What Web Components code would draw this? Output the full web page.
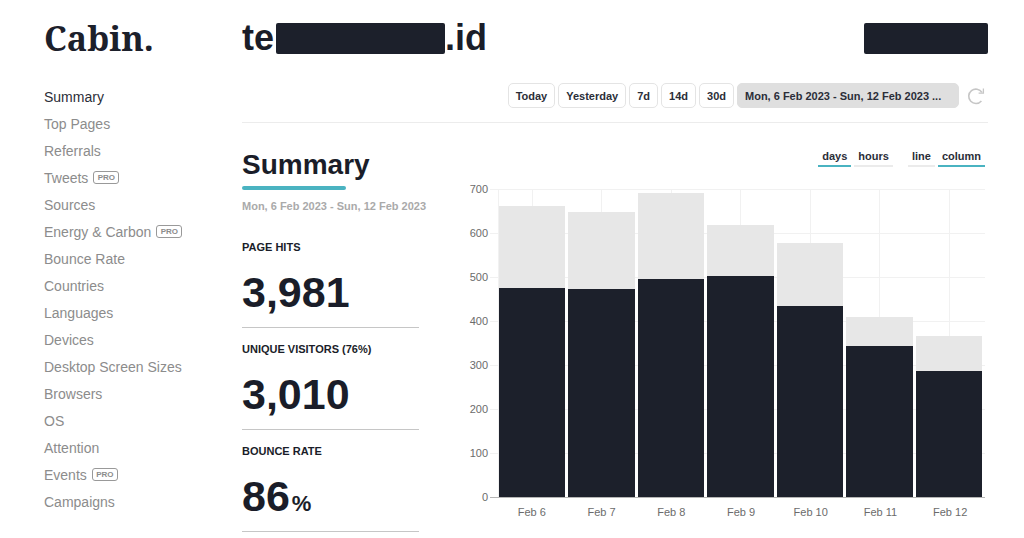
<!DOCTYPE html>
<html lang="en">
<head>
<meta charset="utf-8">
<meta name="viewport" content="width=device-width, initial-scale=1">
<title>Cabin</title>
<style>
  body {
    margin: 0;
    background: #fff;
    color: #1a1d29;
    font-family: "Liberation Sans", Arial, sans-serif;
    --ink: #1c202b;
    --teal: #4ab3c1;
  }
</style>
</head>
<body>
<cabin-app></cabin-app>

<template id="t-app">
  <style>
    :host { display: grid; grid-template-columns: 198px minmax(0, 1fr); padding: 0 36px 0 44px; }
    header, .title { height: 76px; display: flex; align-items: center; box-sizing: border-box; }
    .logo { font: bold 34px/40px "Noto Serif", "DejaVu Serif Condensed", "DejaVu Serif", serif; color: var(--ink); text-decoration: none; }
    .title { justify-content: space-between; }
    h1 { margin: 0; font-size: 36px; line-height: 40px; display: flex; align-items: center; }
    .range { display: flex; justify-content: flex-end; height: 47px; padding-top: 7px; border-bottom: 1px solid #ececec; box-sizing: border-box; }
    .report { display: grid; grid-template-columns: 177px minmax(0, 1fr); column-gap: 48px; padding: 24px 3px 0 0; }
    h2 { margin: 0; font-size: 28px; line-height: 36px; }
    .bar { width: 104px; height: 4px; border-radius: 2px; background: var(--teal); margin-top: 3px; }
    .period { margin: 9px 0 0; font-size: 11px; line-height: 14px; font-weight: bold; color: #aaa; white-space: nowrap; }
    .metrics { padding-top: 13px; }
    .toggles { display: flex; justify-content: flex-end; gap: 15px; height: 42px; }
  </style>
  <header><a class="logo" href="#">Cabin.</a></header>
  <div class="title">
    <h1>te<redacted-box style="--w:169px"></redacted-box>.id</h1>
    <redacted-box style="--w:124px"></redacted-box>
  </div>
  <cabin-nav></cabin-nav>
  <main>
    <div class="range"><range-picker></range-picker></div>
    <div class="report">
      <section>
        <h2>Summary</h2>
        <div class="bar"></div>
        <p class="period">Mon, 6 Feb 2023 - Sun, 12 Feb 2023</p>
        <div class="metrics">
          <metric-card label="PAGE HITS">3,981</metric-card>
          <metric-card label="UNIQUE VISITORS (76%)">3,010</metric-card>
          <metric-card label="BOUNCE RATE" unit="%">86</metric-card>
        </div>
      </section>
      <section>
        <div class="toggles">
          <toggle-group options="days,hours" selected="days" label="Interval"></toggle-group>
          <toggle-group options="line,column" selected="column" label="Chart type"></toggle-group>
        </div>
        <bar-chart max="700" step="100"></bar-chart>
      </section>
    </div>
  </main>
</template>

<template id="t-redacted">
  <style>:host { display: block; flex: none; width: var(--w); height: 31px; border-radius: 2px; background: var(--ink); margin-left: 2px; }</style>
</template>

<template id="t-nav">
  <style>
    :host { display: block; padding-top: 7px; }
    nav { display: flex; flex-direction: column; }
  </style>
  <nav aria-label="Reports">
    <nav-item current>Summary</nav-item>
    <nav-item>Top Pages</nav-item>
    <nav-item>Referrals</nav-item>
    <nav-item pro>Tweets</nav-item>
    <nav-item>Sources</nav-item>
    <nav-item pro>Energy &amp; Carbon</nav-item>
    <nav-item>Bounce Rate</nav-item>
    <nav-item>Countries</nav-item>
    <nav-item>Languages</nav-item>
    <nav-item>Devices</nav-item>
    <nav-item>Desktop Screen Sizes</nav-item>
    <nav-item>Browsers</nav-item>
    <nav-item>OS</nav-item>
    <nav-item>Attention</nav-item>
    <nav-item pro>Events</nav-item>
    <nav-item>Campaigns</nav-item>
  </nav>
</template>

<template id="t-item">
  <style>
    :host { display: flex; align-items: center; gap: 5px; height: 27px; color: #8c8c8c; font-size: 14px; }
    :host([current]) { color: #2b2e38; }
    a { color: inherit; text-decoration: none; line-height: 18px; white-space: nowrap; }
    .pro { display: none; box-sizing: border-box; width: 26px; height: 13px; border: 1px solid #999; border-radius: 3px; font-size: 8px; line-height: 11px; font-weight: bold; text-align: center; }
    :host([pro]) .pro { display: block; }
  </style>
  <a href="#"><slot></slot></a>
</template>

<template id="t-range">
  <style>
    :host { display: flex; align-items: flex-start; gap: 3px; }
    button { font: bold 11px/14px "Liberation Sans", Arial, sans-serif; color: #2b2e38; background: #fff; border: 1px solid #e4e4e4; border-radius: 5px; height: 25px; padding: 0 7px; white-space: nowrap; }
    .custom { width: 222px; background: #dfdfdf; border-color: #dfdfdf; text-align: left; }
    .reload { border: 0; background: none; padding: 0; margin: 0 3px 0 5px; width: 18px; }
    svg { display: block; }
  </style>
  <button>Today</button><button>Yesterday</button><button>7d</button><button>14d</button><button>30d</button>
  <button class="custom">Mon, 6 Feb 2023 - Sun, 12 Feb 2023 ...</button>
  <button class="reload" aria-label="Reload">
    <svg width="18" height="18" viewBox="0 0 18 18" fill="none" stroke="#c6c6c6" stroke-width="1.6"><path d="M14.4 14A7.2 7.2 0 1 1 15 5.4"/><path d="M16.4 1.6V6.2H11.6" stroke-width="1.3"/></svg>
  </button>
</template>

<template id="t-metric">
  <style>
    :host { display: block; box-sizing: border-box; height: 102px; padding-top: 14px; border-bottom: 1px solid #c6c6c6; }
    h3 { margin: 0; font-size: 11px; line-height: 14px; white-space: nowrap; }
    p { margin: 14px 0 0; font-size: 43px; line-height: 48px; font-weight: bold; }
    small { font-size: 22px; }
    small:not(:empty) { margin-left: 2px; }
  </style>
  <h3></h3>
  <p><slot></slot><small></small></p>
</template>

<template id="t-toggle">
  <style>
    :host { display: flex; gap: 3px; align-items: flex-start; }
    button { font: bold 11px/14px "Liberation Sans", Arial, sans-serif; color: #2b2e38; background: none; border: 0; border-bottom: 2px solid #ebebeb; padding: 2px 4px 2px; height: 20px; }
    button[aria-pressed="true"] { border-color: var(--teal); }
  </style>
</template>

<template id="t-chart">
  <style>
    :host { display: grid; grid-template-columns: 21px minmax(0, 1fr); column-gap: 2px; color: #6b6b6b; font-size: 11px; line-height: 14px; }
    .scale { display: flex; flex-direction: column; justify-content: space-between; text-align: right; height: 322px; margin-top: -7px; }
    .plot { height: 309px; box-sizing: border-box; padding-left: 8px; border-bottom: 1px solid #b5b5b5; background: repeating-linear-gradient(#f1f1f1 0 1px, transparent 1px 44px); }
    .bars { display: grid; grid-auto-flow: column; grid-auto-columns: minmax(0, 1fr); height: 308px; border-left: 1px solid #f1f1f1; box-sizing: border-box; }
    .day { display: flex; flex-direction: column; justify-content: flex-end; padding-right: 3px; background: linear-gradient(#f1f1f1, #f1f1f1) 33px 0 / 1px 100% no-repeat; }
    .rest { background: #e7e7e7; }
    .unique { background: var(--ink); }
    .names { grid-column: 2; display: grid; grid-auto-flow: column; grid-auto-columns: minmax(0, 1fr); padding: 1px 0 0 7px; text-align: center; }
  </style>
  <div class="scale"></div>
  <div class="plot"><div class="bars"></div></div>
  <div class="names"></div>
</template>

<script>
  const stamp = (host, id) => {
    const root = host.attachShadow({ mode: "open" });
    root.append(document.getElementById(id).content.cloneNode(true));
    return root;
  };
  const make = (tag, cls, text = "") => {
    const el = document.createElement(tag);
    if (cls) el.className = cls;
    el.textContent = text;
    return el;
  };

  customElements.define("redacted-box", class extends HTMLElement {
    connectedCallback() { if (!this.shadowRoot) stamp(this, "t-redacted"); }
  });

  customElements.define("nav-item", class extends HTMLElement {
    connectedCallback() {
      if (this.shadowRoot) return;
      const root = stamp(this, "t-item");
      if (this.hasAttribute("pro")) root.append(make("span", "pro", "PRO"));
      if (this.hasAttribute("current")) root.querySelector("a").setAttribute("aria-current", "page");
    }
  });

  customElements.define("cabin-nav", class extends HTMLElement {
    connectedCallback() { if (!this.shadowRoot) stamp(this, "t-nav"); }
  });

  customElements.define("range-picker", class extends HTMLElement {
    connectedCallback() { if (!this.shadowRoot) stamp(this, "t-range"); }
  });

  customElements.define("metric-card", class extends HTMLElement {
    connectedCallback() {
      if (this.shadowRoot) return;
      const root = stamp(this, "t-metric");
      root.querySelector("h3").textContent = this.getAttribute("label");
      root.querySelector("small").textContent = this.getAttribute("unit") || "";
    }
  });

  customElements.define("toggle-group", class extends HTMLElement {
    connectedCallback() {
      if (this.shadowRoot) return;
      const root = stamp(this, "t-toggle");
      this.setAttribute("role", "group");
      this.setAttribute("aria-label", this.getAttribute("label"));
      for (const name of this.getAttribute("options").split(",")) {
        const button = make("button", "", name);
        button.setAttribute("aria-pressed", name === this.getAttribute("selected"));
        button.addEventListener("click", () => {
          for (const b of root.querySelectorAll("button")) b.setAttribute("aria-pressed", b === button);
        });
        root.append(button);
      }
    }
  });

  // Each row: day, page hits, unique visitors.
  const DAYS = [
    ["Feb 6", 662, 474], ["Feb 7", 648, 472], ["Feb 8", 690, 495], ["Feb 9", 619, 503],
    ["Feb 10", 578, 435], ["Feb 11", 410, 343], ["Feb 12", 367, 287]
  ];

  customElements.define("bar-chart", class extends HTMLElement {
    connectedCallback() {
      if (this.shadowRoot) return;
      const root = stamp(this, "t-chart");
      const max = Number(this.getAttribute("max"));
      const step = Number(this.getAttribute("step"));
      for (let v = max; v >= 0; v -= step) root.querySelector(".scale").append(make("span", "", String(v)));
      for (const [name, hits, unique] of DAYS) {
        const day = make("div", "day");
        const rest = make("div", "rest");
        const uniq = make("div", "unique");
        rest.style.height = (hits - unique) / max * 100 + "%";
        uniq.style.height = unique / max * 100 + "%";
        day.append(rest, uniq);
        root.querySelector(".bars").append(day);
        root.querySelector(".names").append(make("span", "", name));
      }
    }
  });

  customElements.define("cabin-app", class extends HTMLElement {
    connectedCallback() { if (!this.shadowRoot) stamp(this, "t-app"); }
  });
</script>
</body>
</html>
